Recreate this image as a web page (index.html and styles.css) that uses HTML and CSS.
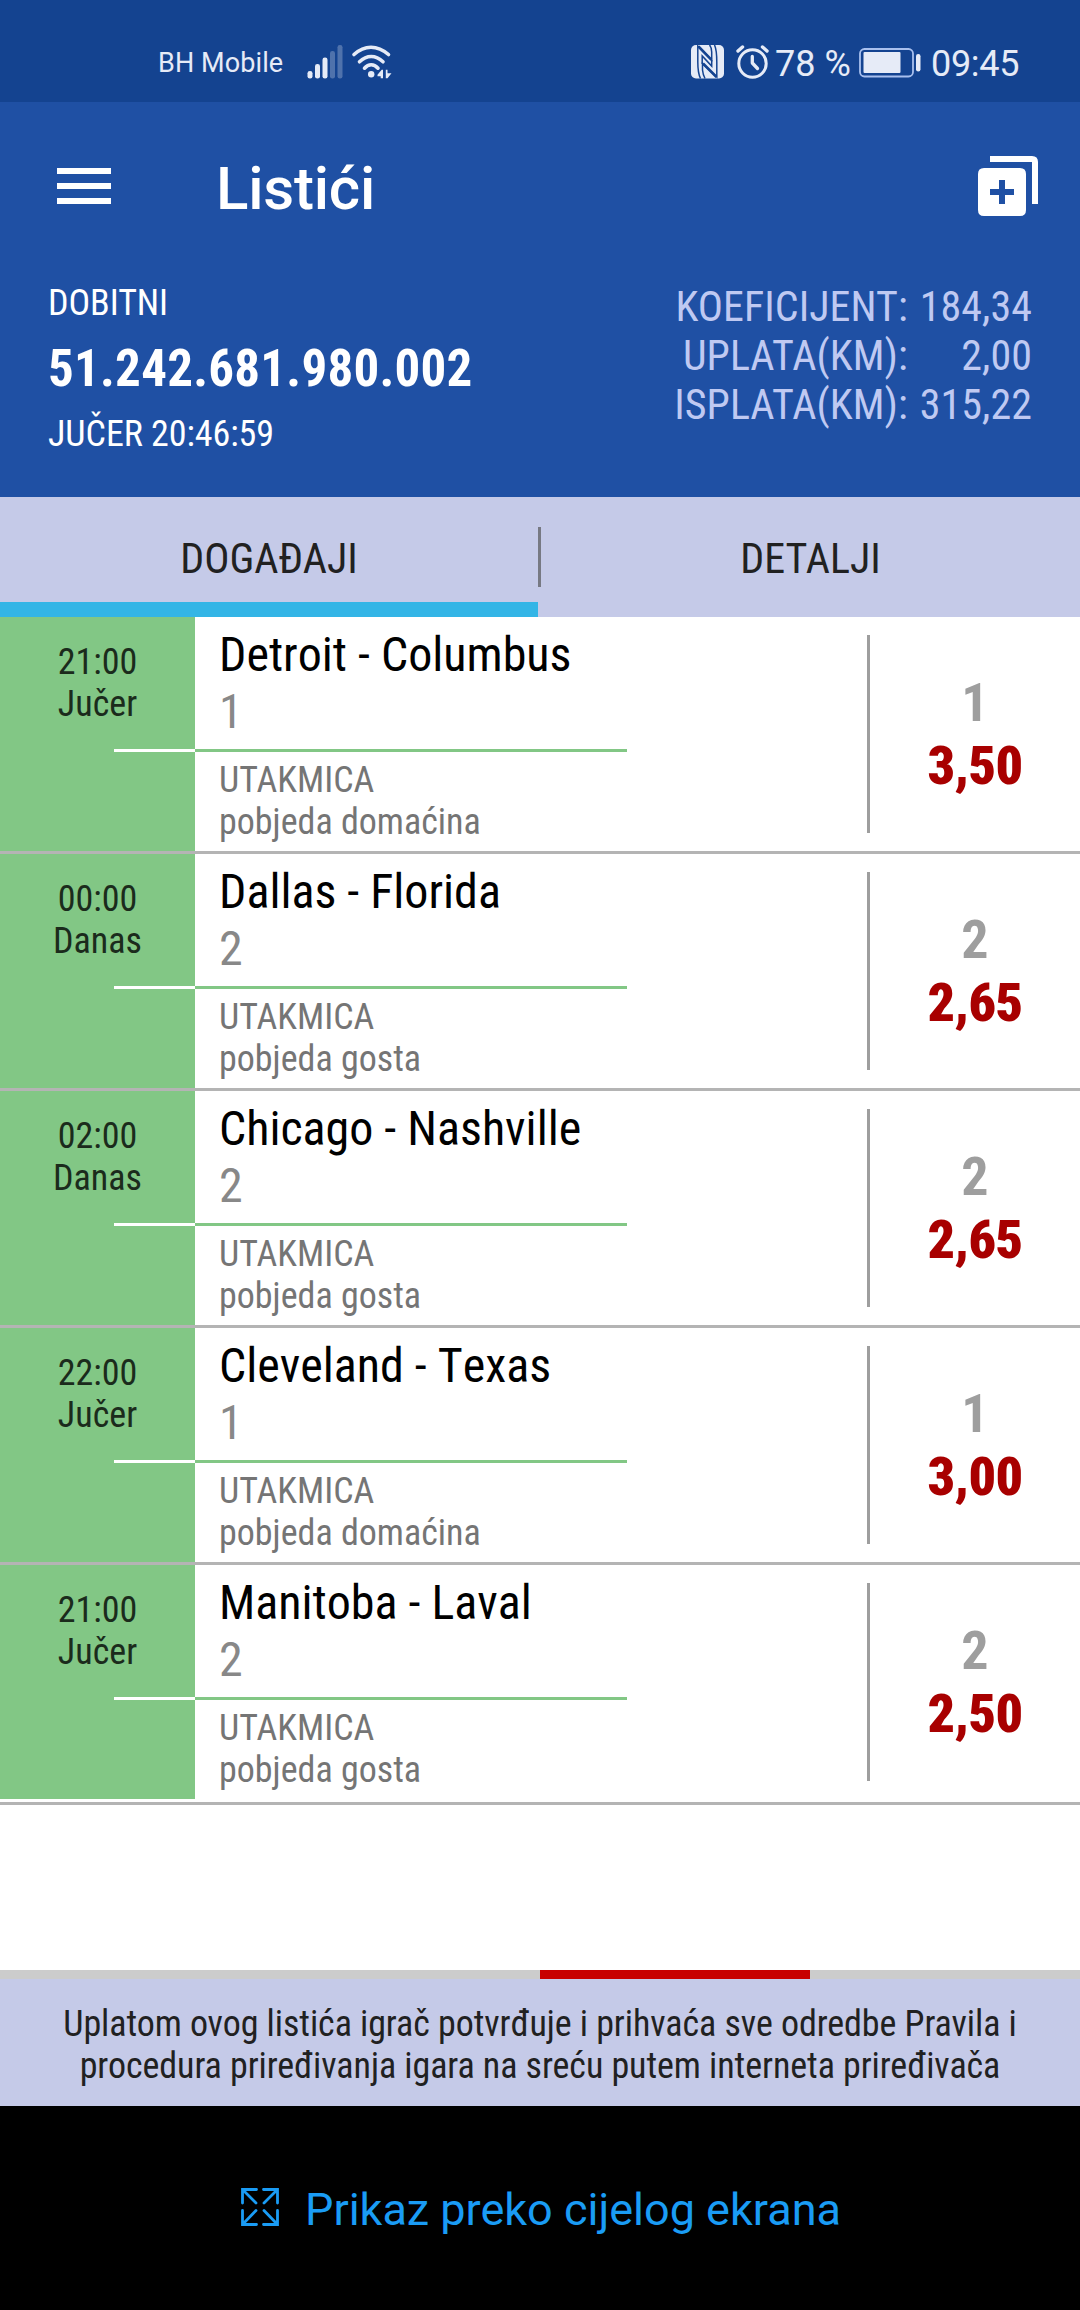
FILE: index.html
```
<!DOCTYPE html>
<html lang="bs">
<head>
<meta charset="utf-8">
<title>Listići</title>
<link rel="stylesheet" href="styles.css">
</head>
<body>
<div class="status">
  <span class="carrier">BH Mobile</span>
  <svg class="signal" width="36" height="34" viewBox="0 0 36 34" fill="#e6ebf7">
    <rect x="0.5" y="26" width="5" height="7.5" rx="2.3"/>
    <rect x="8" y="19" width="5" height="14.5" rx="2.3"/>
    <rect x="15.5" y="12.5" width="5" height="21" rx="2.3"/>
    <g opacity=".28"><rect x="23" y="6" width="5" height="27.5" rx="2.3"/><rect x="30.5" y="0" width="5" height="33.5" rx="2.3"/></g>
  </svg>
  <svg class="wifi" width="41" height="34" viewBox="0 0 41 34" fill="none" stroke="#e6ebf7" stroke-width="3.6" stroke-linecap="round">
    <path d="M3 9.5Q11 2.2 20 2.2T37.500 9.500"/>
    <path d="M8.500 16.800Q14 11.500 20.200 11.500T32 16.800"/>
    <path d="M13.500 23.200Q16.500 19.800 20.200 19.800T27 23.200"/>
    <circle cx="20.200" cy="29.300" r="3.200" fill="#e6ebf7" stroke="none"/>
    <path d="M32 24.800V33.300H29.700V31.200H26.500V29.800L30.700 24.800ZM34.800 24.800H36.500V28.300H40.500L36.500 33.300H34.800Z" fill="#e6ebf7" stroke="none"/>
  </svg>
  <svg class="nfc" width="33" height="34" viewBox="0 0 33 34">
    <rect width="33" height="33.500" rx="5" fill="#e6ebf7"/>
    <g fill="none" stroke="#144390" stroke-width="1.500">
      <path d="M9.500 33.500Q6.800 28 6.800 17V1L20.700 15V7Q20.500 2 18.500 0"/>
      <path d="M23.500 0Q25.800 5 25.800 17V32L11.500 18.500V25Q12 30 14 33.500"/>
      <path d="M11.200 19V11L20.700 21V15"/>
      <path stroke-width="2.600" d="M7.500 1.500L20.500 14.800M12 18.500L25.500 32"/>
    </g>
  </svg>
  <svg class="alarm" width="34" height="34" viewBox="0 0 34 34" fill="none" stroke="#e6ebf7" stroke-linecap="round">
    <circle cx="16.500" cy="18.500" r="13.700" stroke-width="3"/>
    <path d="M16.300 11.500V18L21.500 23.500" stroke-width="3.300" stroke-linejoin="round"/>
    <path d="M2 6L6.500 2M31 6L26.500 2" stroke-width="3.400"/>
  </svg>
  <span class="pct">78 %</span>
  <svg class="battery" width="62" height="30" viewBox="0 0 62 30">
    <rect x="1" y="1" width="53" height="27.500" rx="4.500" fill="none" stroke="#a9c0ee" stroke-width="1.800"/>
    <rect x="4.500" y="4" width="37" height="21" rx="1" fill="#e6ebf7"/>
    <rect x="57" y="6" width="4.500" height="17.500" rx="2.200" fill="#e6ebf7"/>
  </svg>
  <span class="clock">09:45</span>
</div>

<header class="header">
  <div class="appbar">
    <svg width="54" height="36" viewBox="0 0 54 36" fill="#fff"><path d="M0 0H54V6H0ZM0 15H54V21H0ZM0 30H54V36H0Z"/></svg>
    <h1>Listići</h1>
    <svg class="add" width="60" height="60" viewBox="0 0 60 60" fill="#fff">
      <path d="M12 0H54Q60 0 60 6V48H54V6H12Z"/>
      <path fill-rule="evenodd" d="M6 12H42Q48 12 48 18V54Q48 60 42 60H6Q0 60 0 54V18Q0 12 6 12ZM21 24V33H12V39H21V48H27V39H36V33H27V24Z"/>
    </svg>
  </div>
  <div class="ticket">
    <div class="ticket-main">
      <div>DOBITNI</div>
      <div class="number">51.242.681.980.002</div>
      <div>JUČER 20:46:59</div>
    </div>
    <div class="totals">
      <span>KOEFICIJENT:</span><span>184,34</span>
      <span>UPLATA(KM):</span><span>2,00</span>
      <span>ISPLATA(KM):</span><span>315,22</span>
    </div>
  </div>
</header>

<nav class="tabs">
  <div class="tab active">DOGAĐAJI</div>
  <div class="tab-divider"></div>
  <div class="tab">DETALJI</div>
</nav>

<main class="events">
  <section class="event">
    <div class="time"><div>21:00<br>Jučer</div><i></i></div>
    <div class="match"><div class="teams">Detroit - Columbus</div><div class="pick">1</div><hr><div class="market">UTAKMICA<br>pobjeda domaćina</div></div>
    <div class="odds"><span>1</span><b>3,50</b></div>
  </section>
  <section class="event">
    <div class="time"><div>00:00<br>Danas</div><i></i></div>
    <div class="match"><div class="teams">Dallas - Florida</div><div class="pick">2</div><hr><div class="market">UTAKMICA<br>pobjeda gosta</div></div>
    <div class="odds"><span>2</span><b>2,65</b></div>
  </section>
  <section class="event">
    <div class="time"><div>02:00<br>Danas</div><i></i></div>
    <div class="match"><div class="teams">Chicago - Nashville</div><div class="pick">2</div><hr><div class="market">UTAKMICA<br>pobjeda gosta</div></div>
    <div class="odds"><span>2</span><b>2,65</b></div>
  </section>
  <section class="event">
    <div class="time"><div>22:00<br>Jučer</div><i></i></div>
    <div class="match"><div class="teams">Cleveland - Texas</div><div class="pick">1</div><hr><div class="market">UTAKMICA<br>pobjeda domaćina</div></div>
    <div class="odds"><span>1</span><b>3,00</b></div>
  </section>
  <section class="event">
    <div class="time"><div>21:00<br>Jučer</div><i></i></div>
    <div class="match"><div class="teams">Manitoba - Laval</div><div class="pick">2</div><hr><div class="market">UTAKMICA<br>pobjeda gosta</div></div>
    <div class="odds"><span>2</span><b>2,50</b></div>
  </section>
</main>

<div class="pager"><div></div></div>
<footer class="terms">Uplatom ovog listića igrač potvrđuje i prihvaća sve odredbe Pravila i<br>procedura priređivanja igara na sreću putem interneta priređivača</footer>
<div class="fullscreen">
  <svg width="38" height="38" viewBox="0 0 38 38" fill="none" stroke="#1a9cf5" stroke-width="2.800" stroke-linecap="round">
    <path d="M1.500 15V1.500H15.500M1.500 1.500L15 15M22.500 1.500H36.500V15M36.500 1.500L23 15M1.500 22.500V36.500H15.500M1.500 36.500L15 22.500M22.500 36.500H36.500V22.500M36.500 36.500L23 22.500"/>
  </svg>
  <span>Prikaz preko cijelog ekrana</span>
</div>
</body>
</html>
```
FILE: styles.css
```
* { box-sizing: border-box; }
body {
  margin: 0;
  width: 1080px;
  height: 2310px;
  display: flex;
  flex-direction: column;
  background: #fff;
  font-family: "Roboto Condensed", Roboto, sans-serif;
}
svg { display: block; flex: none; }

/* Status bar */
.status {
  height: 102px;
  padding: 43px 0 0 158px;
  display: flex;
  align-items: flex-start;
  background: #144390;
  color: #e6ebf7;
  font-family: Roboto, sans-serif;
  white-space: nowrap;
}
.carrier { width: 149px; font-size: 27px; line-height: 32px; padding-top: 4px; letter-spacing: .1px; }
.signal, .wifi, .nfc, .alarm { margin-top: 2px; }
.wifi { margin-left: 8px; }
.nfc { margin-left: 299px; }
.alarm { margin-left: 12px; }
.pct { width: 84px; margin-left: 5px; font-size: 36px; line-height: 42px; }
.battery { margin: 5px 0 0 0; }
.clock { margin-left: 10px; font-size: 36px; line-height: 42px; letter-spacing: -.3px; }

/* Header */
.header { height: 395px; background: #1f50a4; color: #fff; }
.appbar { height: 180px; padding: 52px 42px 0 57px; display: flex; align-items: flex-start; }
.appbar > svg:first-child { margin-top: 14px; }
.appbar h1 {
  flex: 1;
  margin: 0 0 0 105px;
  font: 500 60px/70px Roboto, sans-serif;
  letter-spacing: -.2px;
}
.add { margin-top: 2px; }
.ticket { display: flex; justify-content: space-between; padding: 0 48px; }
.ticket-main { font-size: 36px; line-height: 42px; letter-spacing: -.05px; }
.number { margin: 15px 0 14px; font-size: 51px; line-height: 60px; font-weight: 700; letter-spacing: .25px; }
.totals {
  display: grid;
  grid-template-columns: auto auto;
  column-gap: 12px;
  align-content: start;
  font-size: 42px;
  line-height: 49px;
  text-align: right;
  color: #bfc9f2;
  letter-spacing: .05px;
}

/* Tabs */
.tabs { height: 120px; display: flex; background: #c5cae8; }
.tab {
  flex: 1;
  padding-top: 37px;
  text-align: center;
  font-size: 42px;
  line-height: 49px;
  color: #212121;
}
.tab.active { flex: 0 0 538px; border-bottom: 15px solid #33b5e6; }
.tab-divider { width: 3px; height: 60px; margin-top: 30px; background: #777983; }

/* Events */
.events { height: 1353px; }
.event { height: 237px; display: flex; border-bottom: 3px solid #b4b4b4; }
.event:last-child { height: 240px; }
.time {
  width: 195px;
  height: 234px;
  padding-top: 24px;
  background: #82c785;
  color: #1b2b1c;
  text-align: center;
  font-size: 36px;
  line-height: 42px;
}
.time i { display: block; width: 81px; height: 3px; margin: 24px 0 0 114px; background: #fff; }
.match { flex: 1; padding-top: 9px; }
.teams, .pick { padding-left: 24px; font-size: 48px; line-height: 57px; color: #000; }
.teams { font-kerning: none; }
.pick { color: #888; }
.match hr { width: 432px; height: 3px; margin: 9px 0 7px; border: 0; background: #82c785; }
.market { padding-left: 24px; font-size: 36px; line-height: 42px; color: #757575; }
.odds {
  width: 213px;
  height: 198px;
  margin-top: 18px;
  border-left: 3px solid #9e9e9e;
  display: flex;
  flex-direction: column;
  justify-content: center;
  text-align: center;
  font-size: 54px;
  line-height: 63px;
  font-weight: 700;
  color: #9e9e9e;
}
.odds b { color: #a80000; letter-spacing: -.6px; }

/* Footer */
.pager { height: 9px; background: #ccc; }
.pager div { width: 270px; height: 9px; margin-left: 540px; background: #c80000; }
.terms {
  height: 127px;
  padding-top: 24px;
  background: #c5cae8;
  color: #212121;
  text-align: center;
  font-size: 36px;
  line-height: 42px;
  letter-spacing: -.07px;
  white-space: nowrap;
}
.fullscreen {
  flex: 1;
  display: flex;
  align-items: flex-start;
  padding: 78px 0 0 241px;
  gap: 26px;
  background: #000;
  color: #1a9cf5;
  font: 45px/52px Roboto, sans-serif;
}
.fullscreen svg { margin-top: 4px; }
```
